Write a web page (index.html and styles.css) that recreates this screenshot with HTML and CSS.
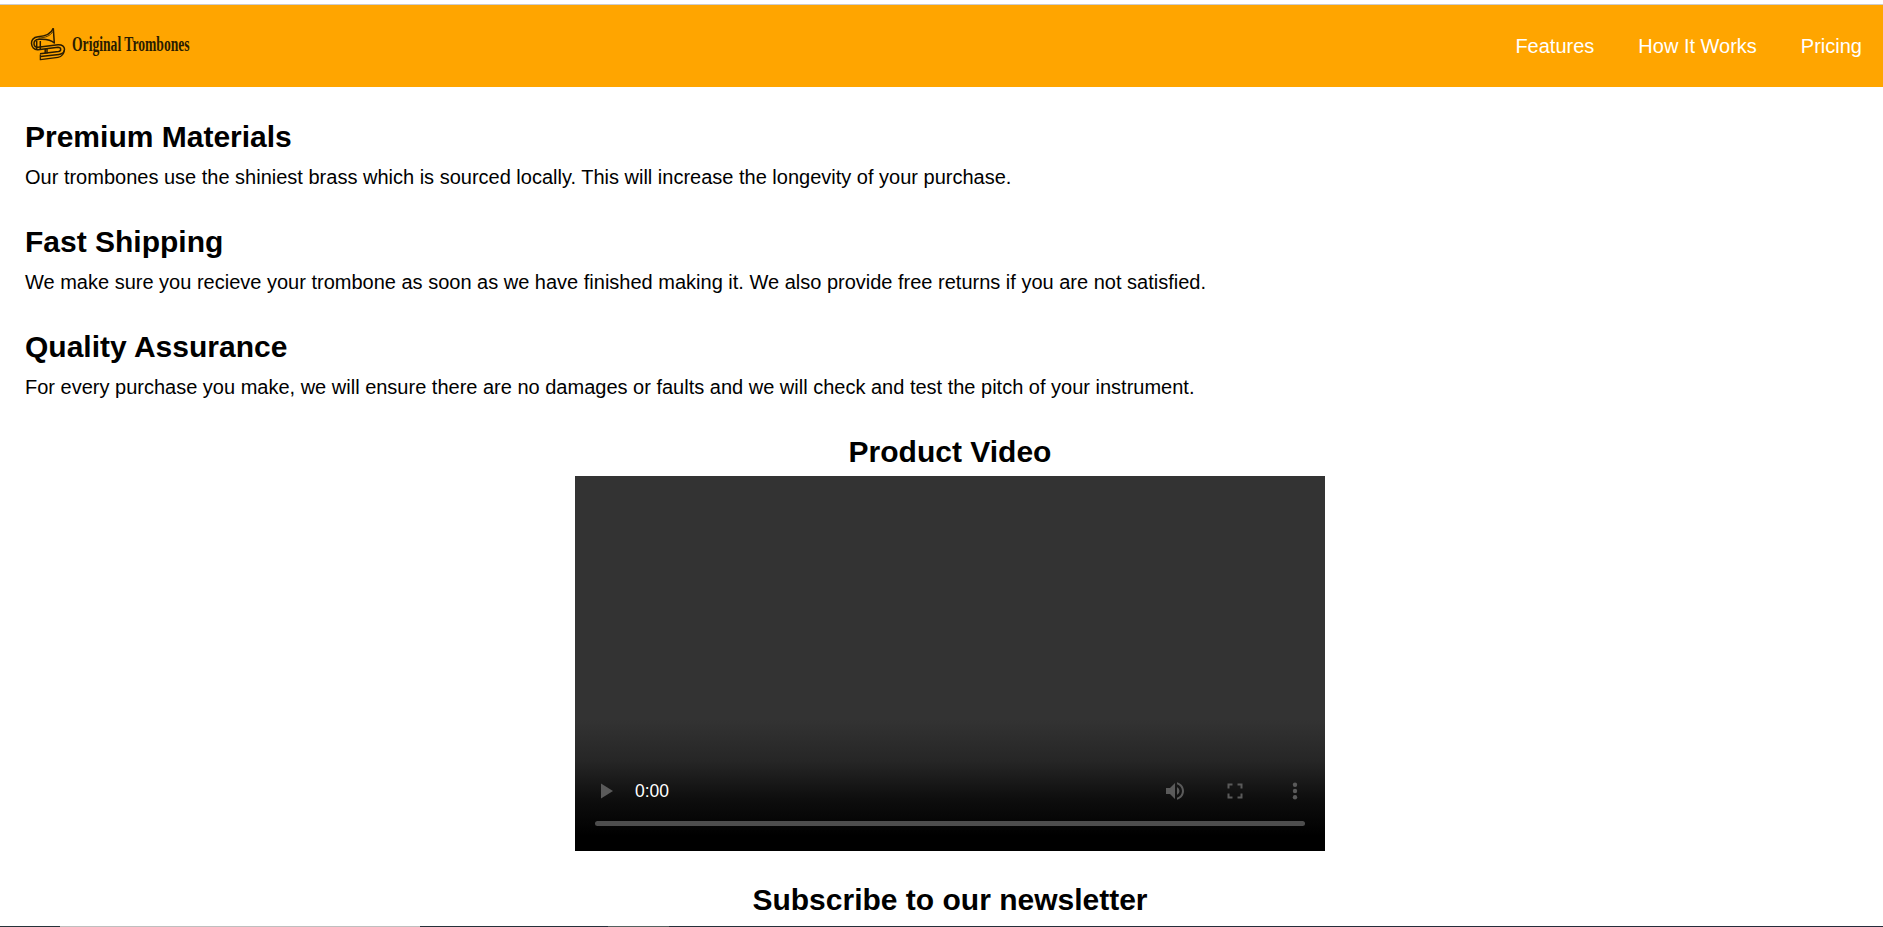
FILE: index.html
```html
<!DOCTYPE html>
<html lang="en">
<head>
<meta charset="utf-8">
<title>Original Trombones</title>
<link rel="stylesheet" href="styles.css">
</head>
<body>
<header class="header">
  <a class="logo">
    <svg class="logo-icon" viewBox="0 0 40 40" width="40" height="40" fill="none" stroke="#2a1c00" stroke-width="1.5" stroke-linejoin="round">
      <path d="M25.300 4.300 C23 10 18 12.300 10 12.700 C5 13 3.300 17 3.500 19.500 C3.700 23 6 26 10 25.700 L30 23.300 C33.500 23.300 33.500 27 30.500 27.500 L12 29.800"/>
      <path d="M25.300 4.300 L26.300 19 C22.500 15.300 17 14.800 11 15.300 C7.500 15.600 5.800 17.500 6 20 C6.200 22 7.500 23.300 10 23.200 L30 20.700 C38.500 20.200 38.500 29.600 31 30.400 L12.500 32.600"/>
      <path d="M24.800 7.500 C22.500 12 17 13.800 10.500 14" stroke-width=".8"/>
      <path d="M12.300 30.500 V35.700 L30 33.300 C34 32.700 36.300 29 36.300 26" stroke-width="1.200"/>
      <path d="M8.700 17 V25 M12.300 17 V25 M17.200 25 V29.500 M19 25 V29.500"/>
    </svg>
    <span class="logo-name">Original Trombones</span>
  </a>
  <nav class="nav">
    <a>Features</a>
    <a>How It Works</a>
    <a>Pricing</a>
  </nav>
</header>
<main class="main">
  <section class="feature">
    <h2>Premium Materials</h2>
    <p>Our trombones use the shiniest brass which is sourced locally. This will increase the longevity of your purchase.</p>
  </section>
  <section class="feature">
    <h2>Fast Shipping</h2>
    <p>We make sure you recieve your trombone as soon as we have finished making it. We also provide free returns if you are not satisfied.</p>
  </section>
  <section class="feature">
    <h2>Quality Assurance</h2>
    <p>For every purchase you make, we will ensure there are no damages or faults and we will check and test the pitch of your instrument.</p>
  </section>
  <section class="video-section">
    <h2>Product Video</h2>
    <div class="player">
      <div class="controls">
        <svg viewBox="0 0 24 24" width="24" height="24"><path d="M6 4.500v15l12-7.500z"/></svg>
        <span class="time">0:00</span>
        <svg viewBox="0 0 24 24" width="24" height="24"><path d="M3 9v6h4l5 5V4L7 9H3zm13.500 3A4.500 4.500 0 0 0 14 7.970v8.050A4.470 4.470 0 0 0 16.500 12zM14 3.230v2.060c2.890.860 5 3.540 5 6.710s-2.110 5.850-5 6.710v2.060c4.010-.910 7-4.490 7-8.770s-2.990-7.860-7-8.770z"/></svg>
        <svg viewBox="0 0 24 24" width="24" height="24"><path d="M7 14.500H4.500v5h5v-2H6.500v-3zM4.500 9.500h2v-3h3v-2h-5v5zm13 8h-3v2h5v-5h-2v3zM14.500 4.500v2h3v3h2v-5h-5z"/></svg>
        <svg viewBox="0 0 24 24" width="24" height="24"><circle cx="12" cy="5.700" r="2.200"/><circle cx="12" cy="12" r="2.200"/><circle cx="12" cy="18.300" r="2.200"/></svg>
      </div>
      <div class="track"></div>
    </div>
  </section>
  <h2 class="newsletter">Subscribe to our newsletter</h2>
</main>
<footer class="edge"><span class="edge-light"></span><span class="edge-mid"></span></footer>
</body>
</html>
```
FILE: styles.css
```css
* { box-sizing: border-box; margin: 0; padding: 0; }
body {
  height: 927px;
  padding-top: 4px;
  display: flex;
  flex-direction: column;
  overflow: hidden;
  background: #fff;
  color: #000;
  font-family: "Liberation Sans", Arial, sans-serif;
  font-size: 20px;
}
.header {
  height: 83px;
  flex: none;
  display: flex;
  justify-content: space-between;
  align-items: center;
  padding: 0 21px 0 28px;
  border-top: 1px solid #ccc;
  background: orange;
}
.logo { display: flex; align-items: center; }
.logo-icon { margin-top: -4px; }
.logo-name {
  width: 118px;
  margin: -5px 0 0 4px;
  font: bold 20.5px/24px "Liberation Serif", serif;
  white-space: nowrap;
  color: #2a1c00;
  transform: scaleX(0.664);
  transform-origin: left;
}
.nav { display: flex; gap: 44px; color: #fff; line-height: 24px; }
.main { flex: 1; min-height: 0; padding: 30px 8px 0 25px; }
h2 { font-size: 30px; line-height: 40px; }
.feature { height: 105px; }
.feature p { line-height: 40px; }
.video-section { height: 448px; display: flex; flex-direction: column; align-items: center; }
.video-section h2 { height: 44px; }
.player {
  width: 750px;
  height: 375px;
  display: flex;
  flex-direction: column;
  justify-content: flex-end;
  padding: 0 20px 25px;
  background: linear-gradient(#333 65%, #262626 76%, #0e0e0e 86%, #000 96%);
}
.controls { display: flex; align-items: center; height: 24px; gap: 36px; margin-right: -2px; color: #fff; fill: #5a5a5a; }
.time { flex: 1; margin-left: -20px; font-size: 17.5px; }
.track { height: 5px; margin-top: 18px; border-radius: 3px; background: #4d4d4d; }
.newsletter { text-align: center; }
.edge { flex: none; height: 1px; display: flex; padding-left: 60px; background: linear-gradient(90deg, #26333a, #262c3c); }
.edge-light { width: 360px; background: #bfbfbf; }
.edge-mid { width: 61px; margin-left: 188px; background: #55605f; }
```
